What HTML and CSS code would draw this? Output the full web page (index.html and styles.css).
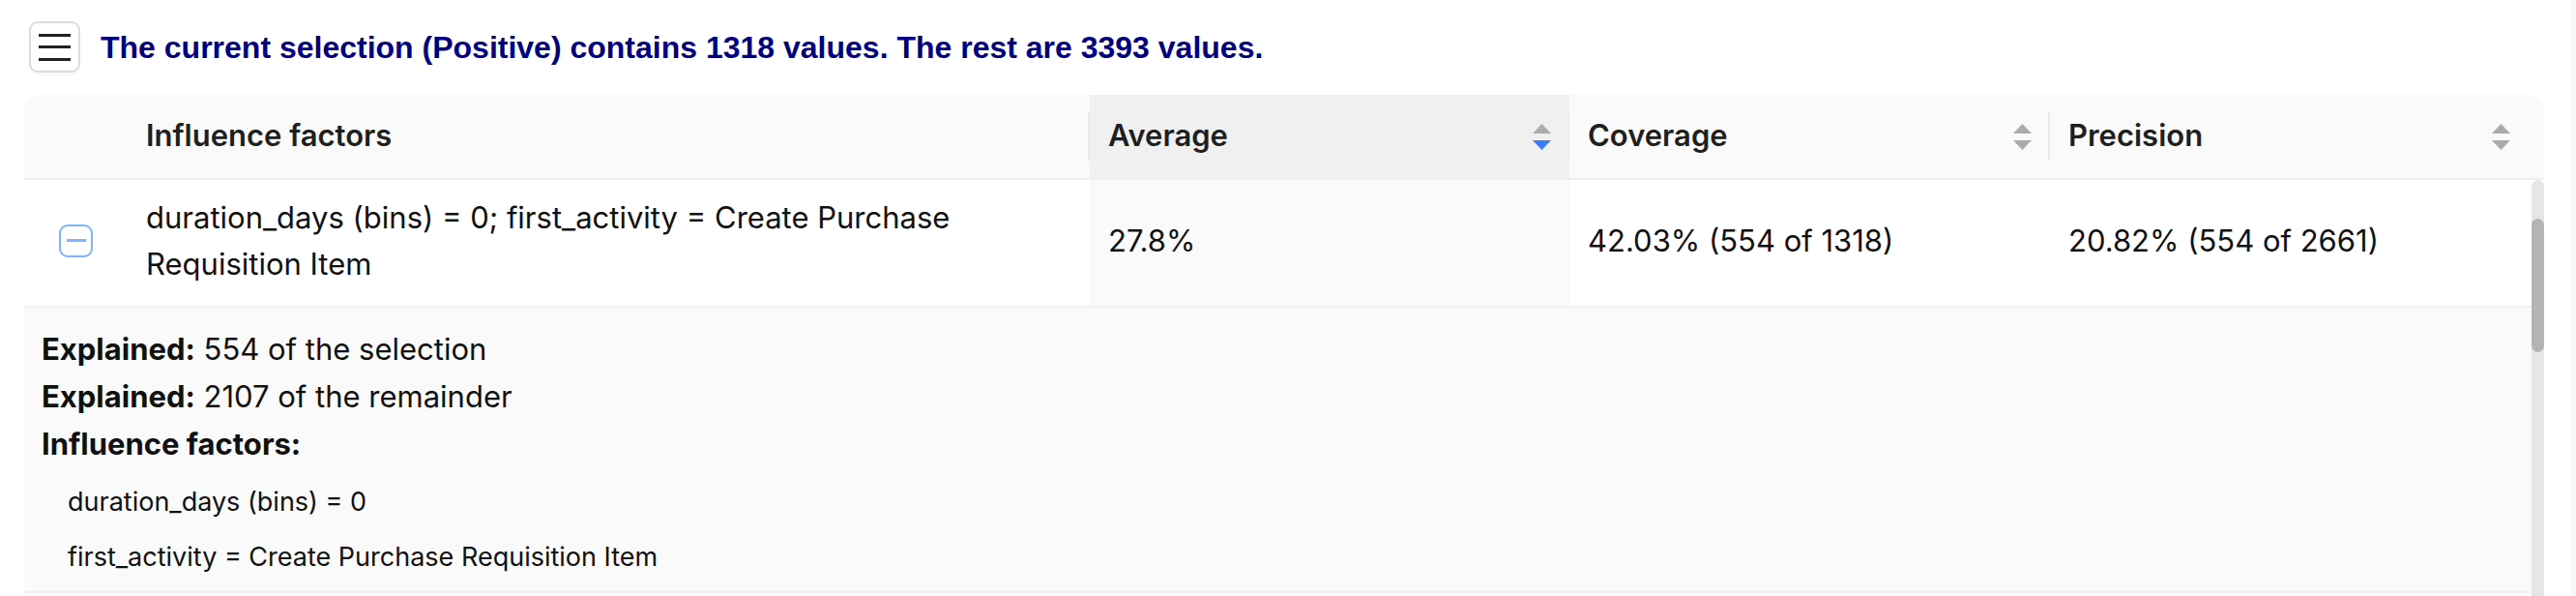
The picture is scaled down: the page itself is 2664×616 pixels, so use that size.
FILE: index.html
```html
<!DOCTYPE html>
<html lang="en">
<head>
<meta charset="utf-8">
<title>Influence factors</title>
<link rel="stylesheet" href="styles.css">
</head>
<body>
<div class="page">
  <main class="app">
    <header class="summary">
      <button class="menu-btn" type="button" aria-label="Menu">
        <span></span><span></span><span></span>
      </button>
      <h1 class="summary-text">The current selection (Positive) contains 1318 values. The rest are 3393 values.</h1>
    </header>

    <section class="factors-table">
      <div class="thead">
        <div class="th th-expand"></div>
        <div class="th th-divided">Influence factors</div>
        <div class="th th-divided th-sorted">
          <span>Average</span>
          <span class="sorter">
            <svg class="caret" viewBox="0 0 19 10"><path d="M9.5 0 19 10H0z"/></svg>
            <svg class="caret caret-active" viewBox="0 0 19 10"><path d="M0 0h19L9.5 10z"/></svg>
          </span>
        </div>
        <div class="th th-divided">
          <span>Coverage</span>
          <span class="sorter">
            <svg class="caret" viewBox="0 0 19 10"><path d="M9.5 0 19 10H0z"/></svg>
            <svg class="caret" viewBox="0 0 19 10"><path d="M0 0h19L9.5 10z"/></svg>
          </span>
        </div>
        <div class="th th-last">
          <span>Precision</span>
          <span class="sorter">
            <svg class="caret" viewBox="0 0 19 10"><path d="M9.5 0 19 10H0z"/></svg>
            <svg class="caret" viewBox="0 0 19 10"><path d="M0 0h19L9.5 10z"/></svg>
          </span>
        </div>
      </div>

      <div class="tbody-wrap">
        <div class="tbody">
          <div class="row">
            <div class="td td-expand">
              <button class="expand-btn" type="button" aria-label="Collapse row"><span></span></button>
            </div>
            <div class="td">duration_days (bins) = 0; first_activity = Create Purchase Requisition Item</div>
            <div class="td td-sorted">27.8%</div>
            <div class="td">42.03% (554 of 1318)</div>
            <div class="td">20.82% (554 of 2661)</div>
          </div>

          <div class="expanded">
            <p><b>Explained:</b> 554 of the selection</p>
            <p><b>Explained:</b> 2107 of the remainder</p>
            <p><b>Influence factors:</b></p>
            <ul class="factor-list">
              <li>duration_days (bins) = 0</li>
              <li>first_activity = Create Purchase Requisition Item</li>
            </ul>
          </div>
        </div>
        <div class="scrollbar"><div class="thumb"></div></div>
      </div>
    </section>
  </main>
  <div class="edge"></div>
</div>
</body>
</html>
```

FILE: styles.css
```css
html, body {
  margin: 0;
  height: 616px;
  overflow: hidden;
  background: #ffffff;
}

.page {
  display: flex;
  height: 616px;
}

.app {
  flex: 1;
  padding: 22px 28px 0 25px;
  font-family: Inter, "Noto Sans", sans-serif;
  color: #111111;
}

.edge {
  width: 5px;
  background: #f7f7fc;
}

/* top summary line */
.summary {
  display: flex;
  align-items: center;
  gap: 21px;
  height: 53px;
  margin: 0 0 23px 5px;
}

.menu-btn {
  width: 53px;
  height: 53px;
  box-sizing: border-box;
  border: 2px solid #dcdcdc;
  border-radius: 9px;
  background: #ffffff;
  box-shadow: 0 3px 0 rgba(0, 0, 0, 0.025);
  display: flex;
  flex-direction: column;
  align-items: center;
  justify-content: center;
  gap: 9.5px;
  padding: 0;
}

.menu-btn span {
  width: 33px;
  height: 3px;
  background: #222222;
}

.summary-text {
  margin: 0;
  font: 700 32px/1 "Liberation Sans", Arial, sans-serif;
  color: #000080;
}

/* table */
.factors-table {
  width: 2606px;
}

.thead {
  display: grid;
  grid-template-columns: 107px 995px 496px 497px 1fr;
  height: 86px;
  background: #fafafa;
  border-radius: 16px 16px 0 0;
  border-bottom: 2px solid #efefef;
}

.th {
  display: flex;
  align-items: center;
  padding: 0 19px 3px;
  font-size: 31px;
  font-weight: 600;
  color: #1f1f1f;
}

.th .sorter {
  margin-top: 3px;
}

.th-divided {
  background-image: linear-gradient(#ececec, #ececec);
  background-repeat: no-repeat;
  background-size: 2px 50px;
  background-position: right center;
}

.th-sorted {
  background-color: #f0f0f0;
}

.th-last {
  padding-right: 35px;
}

.sorter {
  margin-left: auto;
  display: flex;
  flex-direction: column;
  gap: 7px;
}

.caret {
  display: block;
  width: 19px;
  height: 10px;
  fill: #ababab;
}

.caret-active {
  fill: #3b7cff;
}

.tbody-wrap {
  display: flex;
}

.tbody {
  flex: 1;
}

.row {
  display: grid;
  grid-template-columns: 107px 995px 496px 497px 1fr;
  border-bottom: 2px solid #f0f0f0;
}

.td {
  display: flex;
  align-items: center;
  padding: 15px 19px 19px;
  font-size: 31px;
  line-height: 48px;
  color: #111111;
}

.td-sorted {
  background: #fafafa;
}

.td-expand {
  justify-content: center;
  padding: 0;
}

.expand-btn {
  width: 35px;
  height: 34px;
  box-sizing: border-box;
  margin-bottom: 5px;
  border: 2px solid #7fb2ff;
  border-radius: 9px;
  background: #ffffff;
  display: flex;
  align-items: center;
  justify-content: center;
  padding: 0;
}

.expand-btn span {
  width: 20px;
  height: 2.5px;
  background: #7fb2ff;
}

.expanded {
  height: 295px;
  box-sizing: border-box;
  padding: 17.5px 0 0 18px;
  background: #fafafa;
  border-bottom: 2px solid #f0f0f0;
  font-size: 31px;
  line-height: 49px;
  color: #111111;
}

.expanded p {
  margin: 0;
}

.expanded b {
  font-weight: 700;
}

.factor-list {
  list-style: none;
  margin: 7px 0 0;
  padding: 0 0 0 27px;
  font-size: 27px;
  line-height: 57px;
}

.scrollbar {
  width: 13px;
  height: 430px;
  background: #e6e6e6;
  border-radius: 7px 7px 0 0;
}

.thumb {
  margin-top: 40px;
  height: 138px;
  background: #b4b4b4;
  border-radius: 7px;
}
```
